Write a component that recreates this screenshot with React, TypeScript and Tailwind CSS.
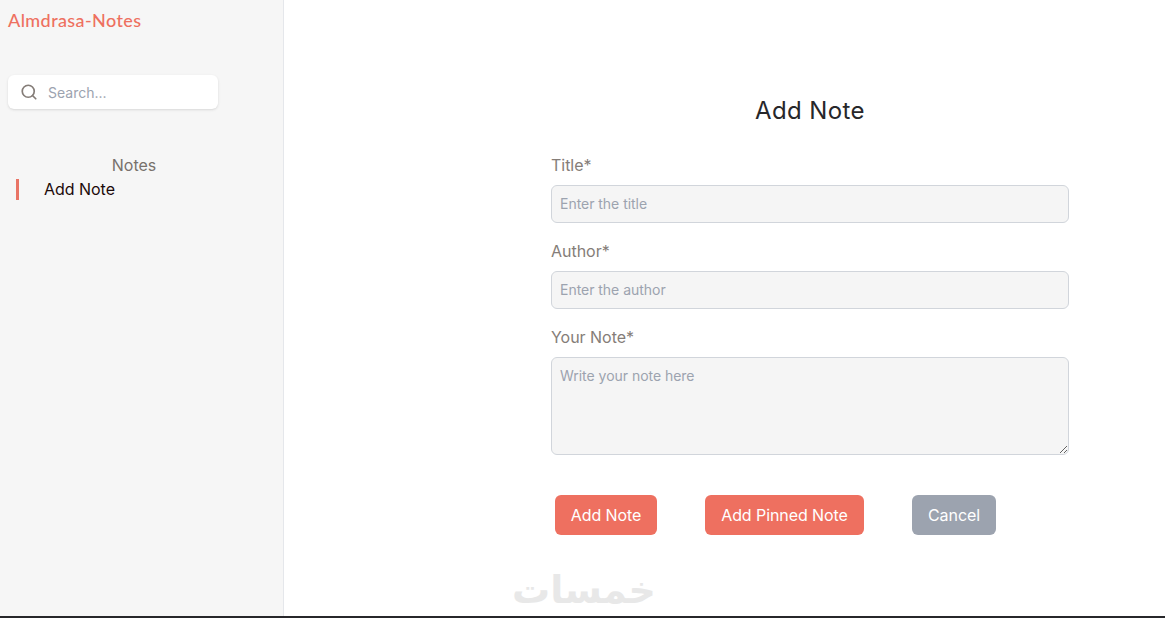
import { Search } from "lucide-react";

function Field({ label, placeholder }: { label: string; placeholder: string }) {
  return (
    <div className="flex flex-col gap-2">
      <label className="text-base leading-6 tracking-[-0.03px] text-[#857d78]">{label}</label>
      <input
        placeholder={placeholder}
        className="h-[38px] w-full rounded-md border border-[#d1d5db] bg-[#f5f5f5] px-2 pb-[2px] text-sm tracking-[-0.03px] text-[#1f2937] outline-none placeholder:text-[#9ca3af]"
      />
    </div>
  );
}

export default function App() {
  return (
    <div className="relative flex h-[618px] w-full overflow-hidden border-b-2 border-[#27272a] bg-white font-['Inter',sans-serif]">
      <aside className="flex h-full w-[284px] shrink-0 flex-col border-r border-[#e5e7eb] bg-[#f6f6f6] pl-2">
        <h1 className="pt-[10px] font-['Lato',sans-serif] text-[18px] leading-5 font-medium tracking-[0.4px] text-[#ee7060]">
          Almdrasa-Notes
        </h1>
        <div className="mt-[45px] flex h-[34px] w-[210px] items-center gap-[10px] rounded-md bg-white pl-3 shadow-sm">
          <Search size={18} strokeWidth={2.25} className="text-[#857d78]" />
          <span className="pt-[2px] text-sm text-[#9ca3af]">Search...</span>
        </div>
        <div className="mt-[44px] w-[252px] text-center text-base leading-6 text-[#78716c]">Notes</div>
        <div className="flex h-6 items-center">
          <span className="ml-2 h-[21px] w-[3px] bg-[#e97466]" />
          <span className="ml-[25px] text-base leading-6 tracking-[-0.03px] text-[#1c0a0a]">Add Note</span>
        </div>
      </aside>

      <main className="flex-1 pt-[93px] pl-[267px]">
        <form className="flex w-[518px] flex-col">
          <h2 className="text-center text-2xl leading-9 tracking-[0.4px] text-[#27272a]">Add Note</h2>
          <div className="mt-6 flex flex-col gap-4">
            <Field label="Title*" placeholder="Enter the title" />
            <Field label="Author*" placeholder="Enter the author" />
            <div className="flex flex-col gap-2">
              <label className="text-base leading-6 tracking-[-0.03px] text-[#857d78]">Your Note*</label>
              <textarea
                placeholder="Write your note here"
                className="h-[98px] w-full rounded-md border border-[#d1d5db] bg-[#f5f5f5] px-2 py-2 text-sm tracking-[-0.03px] outline-none placeholder:text-[#9ca3af]"
              />
            </div>
          </div>
          <div className="mt-10 flex gap-12 pl-1">
            <button type="button" className="h-10 w-[102px] rounded-md bg-[#ee7060] text-base tracking-[-0.08px] text-white">
              Add Note
            </button>
            <button type="button" className="h-10 w-[159px] rounded-md bg-[#ee7060] text-base tracking-[-0.08px] text-white">
              Add Pinned Note
            </button>
            <button type="button" className="h-10 w-[84px] rounded-md bg-[#9ca3af] text-base tracking-[-0.08px] text-white">
              Cancel
            </button>
          </div>
        </form>
      </main>

      <div
        dir="rtl"
        className="absolute top-[564px] left-[512px] font-['DejaVu_Sans',sans-serif] text-[38px] leading-[52px] font-bold text-[#e8e8e8]"
      >
        خمسات
      </div>
    </div>
  );
}
